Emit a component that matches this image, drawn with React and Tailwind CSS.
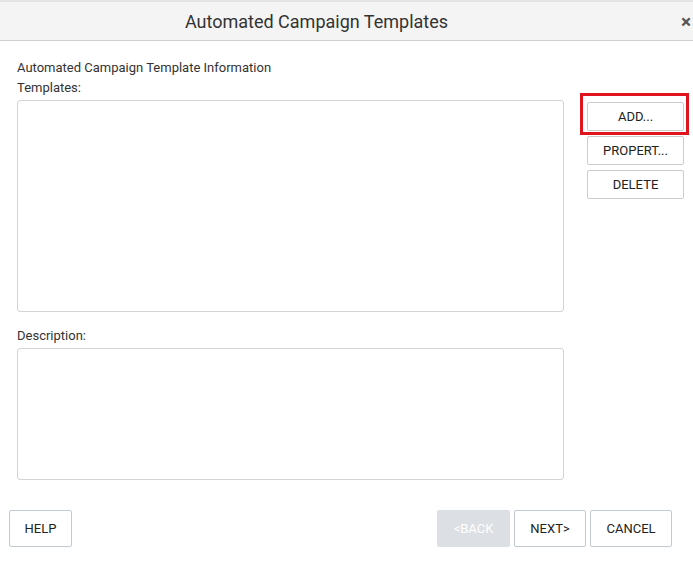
import React from 'react'

const font = { fontFamily: 'Roboto, "Liberation Sans", sans-serif' }

function SideButton({ children }) {
  return (
    <button className="h-[29px] w-[97px] rounded-[2px] border border-[#c9cdd2] bg-white text-[13px] text-[#222] uppercase">
      {children}
    </button>
  )
}

function FooterButton({ children, disabled, className = '' }) {
  return (
    <button
      disabled={disabled}
      className={
        'h-[37px] rounded-[2px] border text-[13px] uppercase ' +
        (disabled
          ? 'border-[#dcdfe3] bg-[#dcdfe3] text-white'
          : 'border-[#c2c9d1] bg-white text-[#222]') +
        ' ' + className
      }
    >
      {children}
    </button>
  )
}

export default function App() {
  return (
    <div className="h-[577px] w-[693px] bg-white" style={font}>
      {/* Header */}
      <div className="flex h-[41px] items-center border-t-2 border-b border-t-[#e3e3e3] border-b-[#cfcfcf] bg-[#f4f4f4]">
        <div className="flex-1 pr-[46px] text-center text-[18px] text-[#333]">Automated Campaign Templates</div>
        <button className="w-[14px] text-[19px] font-bold leading-none text-[#555]">×</button>
      </div>

      {/* Body */}
      <div className="pl-[17px] pr-[9px] pt-[19px]">
        <div className="text-[13px] leading-[16px] text-[#333]">Automated Campaign Template Information</div>
        <div className="mt-[4px] text-[13px] leading-[16px] text-[#333]">Templates:</div>

        <div className="mt-[4px] flex gap-[23px]">
          <div className="h-[212px] w-[547px] shrink-0 rounded-[3px] border border-[#d4d4d4]"></div>
          <div className="flex flex-col gap-[5px] pt-[2px]">
            <div className="relative">
              <SideButton>Add...</SideButton>
              <div className="pointer-events-none absolute -top-[9px] -right-[5px] -bottom-[4px] -left-[7px] border-[3px] border-[#e0141c]"></div>
            </div>
            <SideButton>Propert...</SideButton>
            <SideButton>Delete</SideButton>
          </div>
        </div>

        <div className="mt-[16px] text-[13px] leading-[16px] text-[#333]">Description:</div>
        <div className="mt-[4px] h-[132px] w-[547px] rounded-[3px] border border-[#d4d4d4]"></div>
      </div>

      {/* Footer */}
      <div className="mt-[30px] flex items-center pl-[9px] pr-[21px]">
        <FooterButton className="w-[63px]">Help</FooterButton>
        <div className="flex-1"></div>
        <div className="flex gap-[4px]">
          <FooterButton disabled className="w-[73px]">&lt;Back</FooterButton>
          <FooterButton className="w-[72px]">Next&gt;</FooterButton>
          <FooterButton className="w-[82px]">Cancel</FooterButton>
        </div>
      </div>
    </div>
  )
}
